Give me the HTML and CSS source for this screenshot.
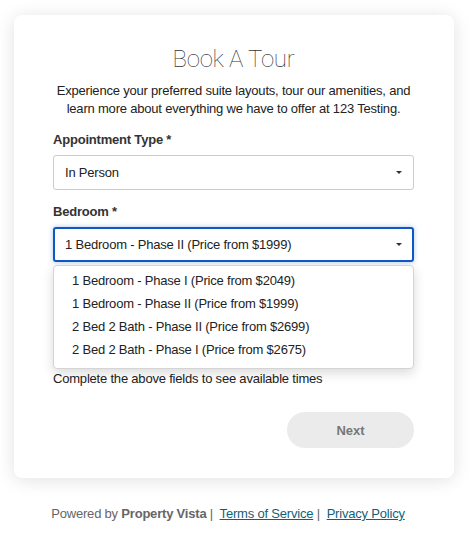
FILE: index.html
```html
<!DOCTYPE html>
<html lang="en">
<head>
  <meta charset="UTF-8">
  <meta name="viewport" content="width=device-width, initial-scale=1.0">
  <title>Book A Tour</title>
  <link rel="stylesheet" href="styles.css">
</head>
<body>
  <main class="card">
    <h1 class="title">Book A Tour</h1>
    <p class="intro">Experience your preferred suite layouts, tour our amenities, and learn more about everything we have to offer at 123 Testing.</p>

    <form class="tour-form">
      <div class="field">
        <label class="field-label">Appointment Type *</label>
        <div class="select">
          <span>In Person</span>
          <span class="caret"></span>
        </div>
      </div>

      <div class="field field-open">
        <label class="field-label">Bedroom *</label>
        <div class="select select-active">
          <span>1 Bedroom - Phase II (Price from $1999)</span>
          <span class="caret"></span>
        </div>
        <ul class="options">
          <li>1 Bedroom - Phase I (Price from $2049)</li>
          <li>1 Bedroom - Phase II (Price from $1999)</li>
          <li>2 Bed 2 Bath - Phase II (Price from $2699)</li>
          <li>2 Bed 2 Bath - Phase I (Price from $2675)</li>
        </ul>
      </div>

      <!-- covered by the open bedroom list -->
      <div class="field">
        <span class="field-label">&nbsp;</span>
        <div class="select">
          <span></span>
          <span class="caret"></span>
        </div>
      </div>

      <div class="field field-last">
        <span class="field-label">&nbsp;</span>
      </div>

      <p class="note">Complete the above fields to see available times</p>

      <div class="actions">
        <button type="button" class="next" disabled>Next</button>
      </div>
    </form>
  </main>

  <footer class="footer">
    Powered by <strong>Property Vista</strong> |&nbsp; <a href="#">Terms of Service</a> |&nbsp; <a href="#">Privacy Policy</a>
  </footer>
</body>
</html>
```

FILE: styles.css
```css
body {
  font-family: "Liberation Sans", Arial, sans-serif;
  font-size: 13px;
  letter-spacing: -0.2px;
  color: #222;
  margin: 0;
  padding: 0;
  background-color: #fff;
}

.card {
  width: 440px;
  margin: 15px 0 0 14px;
  padding: 30px 40px 30px 39px;
  box-sizing: border-box;
  background-color: white;
  border-radius: 8px;
  box-shadow: 0 2px 18px rgba(0, 0, 0, 0.12);
}

.title {
  margin: 0;
  text-align: center;
  font-family: Roboto, "Liberation Sans", sans-serif;
  font-weight: 100;
  font-size: 24px;
  letter-spacing: -0.3px;
  line-height: 29px;
  color: #333;
}

.intro {
  margin: 8px 0 0;
  text-align: center;
  line-height: 18px;
  color: #222;
}

.tour-form {
  margin-top: 14px;
}

.field {
  position: relative;
  margin-bottom: 14px;
}

.field-last {
  margin-bottom: 0;
}

.field-label {
  display: block;
  font-weight: bold;
  line-height: 16px;
  margin-bottom: 7px;
  color: #333;
}

.select {
  display: flex;
  align-items: center;
  justify-content: space-between;
  height: 35px;
  padding: 0 10px 0 11px;
  box-sizing: border-box;
  border: 1px solid #ccc;
  border-radius: 3px;
  background-color: white;
}

.select-active {
  border: 2px solid #0d58c4;
  padding: 0 9px 0 10px;
  box-shadow: 0 0 5px rgba(13, 88, 196, 0.35);
}

.caret {
  width: 0;
  height: 0;
  border-left: 3.5px solid transparent;
  border-right: 3.5px solid transparent;
  border-top: 3.5px solid #333;
  margin-right: 1px;
}

.options {
  position: absolute;
  top: 61px;
  left: 0;
  right: 0;
  margin: 0;
  padding: 3px 0 7px;
  list-style: none;
  background-color: white;
  border: 1px solid #d4d4d4;
  border-radius: 4px;
  box-shadow: 0 4px 12px rgba(0, 0, 0, 0.15);
  z-index: 2;
}

.options li {
  line-height: 23px;
  padding-left: 18px;
  color: #222;
}

.note {
  margin: 0;
  line-height: 16px;
  color: #222;
}

.actions {
  display: flex;
  justify-content: flex-end;
  margin-top: 25px;
}

.next {
  width: 127px;
  height: 36px;
  border: none;
  border-radius: 18px;
  background-color: #ebebeb;
  color: #777;
  font-family: "Liberation Sans", Arial, sans-serif;
  font-size: 13px;
  font-weight: bold;
}

.footer {
  margin-top: 28px;
  padding-right: 15px;
  text-align: center;
  color: #666;
  line-height: 16px;
}

.footer strong {
  color: #666;
}

.footer a {
  color: #135f7a;
}
```
